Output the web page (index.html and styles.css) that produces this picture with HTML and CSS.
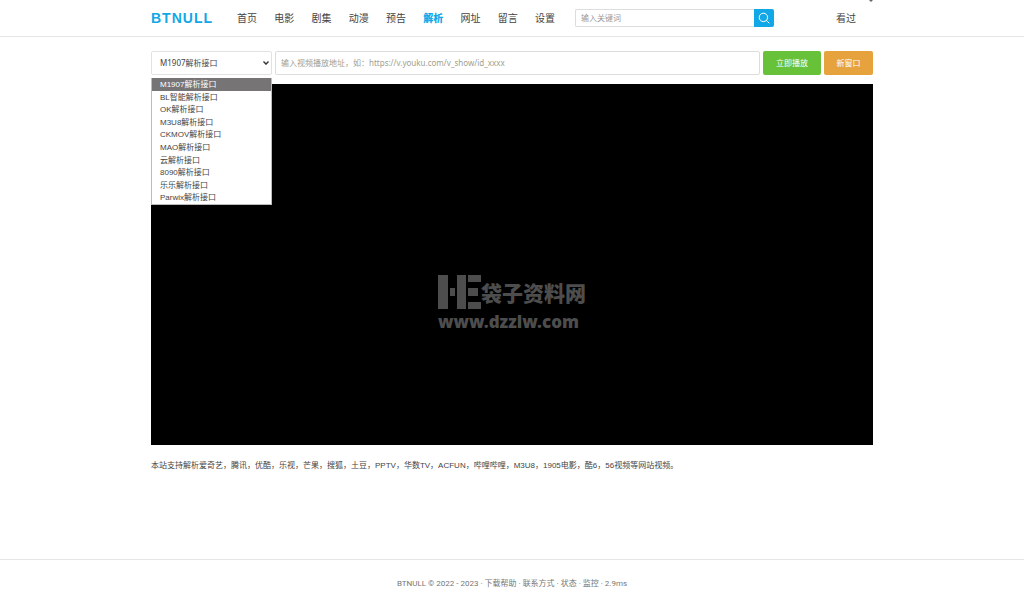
FILE: index.html
```html
<!DOCTYPE html>
<html lang="zh-CN">
<head>
<meta charset="utf-8">
<meta name="viewport" content="width=device-width, initial-scale=1">
<title>BTNULL 解析</title>
<link rel="stylesheet" href="styles.css">
</head>
<body>
<header class="header">
  <div class="container header-row">
    <a class="brand" href="#">BTNULL</a>
    <nav class="nav">
      <a href="#">首页</a>
      <a href="#">电影</a>
      <a href="#">剧集</a>
      <a href="#">动漫</a>
      <a href="#">预告</a>
      <a href="#" class="active" aria-current="page">解析</a>
      <a href="#">网址</a>
      <a href="#">留言</a>
      <a href="#">设置</a>
    </nav>
    <form class="search">
      <input type="search" placeholder="输入关键词" aria-label="输入关键词">
      <button type="button" aria-label="搜索">
        <svg viewBox="0 0 12 12" width="12" height="12" fill="none" stroke="#fff"><circle cx="5.4" cy="5.4" r="4.2"/><path d="M8.5 8.5 11 11" stroke-linecap="round"/></svg>
      </button>
    </form>
    <a class="history" href="#">看过</a>
  </div>
  <svg class="corner-mark" viewBox="0 0 4 2" width="4" height="2" aria-hidden="true"><path d="M0 0H4L2 2Z" fill="#666"/></svg>
</header>
<main class="container main">
  <form class="toolbar">
    <div class="picker">
      <select aria-label="解析接口">
        <option selected>M1907解析接口</option>
        <option>BL智能解析接口</option>
        <option>OK解析接口</option>
        <option>M3U8解析接口</option>
        <option>CKMOV解析接口</option>
        <option>MAO解析接口</option>
        <option>云解析接口</option>
        <option>8090解析接口</option>
        <option>乐乐解析接口</option>
        <option>Parwix解析接口</option>
      </select>
      <svg class="chevron" viewBox="0 0 6 4" width="6" height="4" fill="none" stroke="#333" stroke-width="1.4" aria-hidden="true"><path d="M.5.6 3 3.1 5.5.6"/></svg>
      <ul class="menu">
        <li class="selected">M1907解析接口</li>
        <li>BL智能解析接口</li>
        <li>OK解析接口</li>
        <li>M3U8解析接口</li>
        <li>CKMOV解析接口</li>
        <li>MAO解析接口</li>
        <li>云解析接口</li>
        <li>8090解析接口</li>
        <li>乐乐解析接口</li>
        <li>Parwix解析接口</li>
      </ul>
    </div>
    <input class="url" type="text" aria-label="视频播放地址" placeholder="输入视频播放地址，如：https://v.youku.com/v_show/id_xxxx">
    <button class="btn play" type="button">立即播放</button>
    <button class="btn window" type="button">新窗口</button>
  </form>
  <section class="player">
    <div class="watermark">
      <div class="watermark-top">
        <svg viewBox="0 0 43 34" width="43" height="34" fill="#4d4d4d" aria-hidden="true"><path d="M0 0H10V34H0ZM12 13H17V21H12ZM19 0H28V34H19ZM30 0H43V7H30ZM30 13H40V21H30ZM30 27H43V34H30Z"/></svg>
        <span>袋子资料网</span>
      </div>
      <div class="watermark-url">www.dzzlw.com</div>
    </div>
  </section>
  <p class="note">本站支持解析爱奇艺，腾讯，优酷，乐视，芒果，搜狐，土豆，PPTV，华数TV，ACFUN，哔哩哔哩，M3U8，1905电影，酷6，56视频等网站视频。</p>
</main>
<footer class="footer">BTNULL © 2022 - 2023 · <a href="#">下载帮助</a> · <a href="#">联系方式</a> · <a href="#">状态</a> · <a href="#">监控</a> · 2.9ms</footer>
</body>
</html>
```
FILE: styles.css
```css
* {
  box-sizing: border-box;
}

body {
  margin: 0;
  min-height: 100vh;
  display: flex;
  flex-direction: column;
  background: #fff;
  color: #444;
  font: 8px/12px "Liberation Sans", "Noto Sans CJK SC", sans-serif;
}

a {
  color: inherit;
  text-decoration: none;
}

input,
select,
button {
  margin: 0;
  font: 8px/12px "Noto Sans", "Noto Sans CJK SC", sans-serif;
}

.container {
  width: 100%;
  max-width: 722px;
  margin: 0 auto;
}

.header {
  position: relative;
  border-bottom: 1px solid #e6e6e6;
}

.header-row {
  display: flex;
  align-items: center;
  min-height: 36px;
  padding-right: 17px;
}

.corner-mark {
  position: absolute;
  top: 0;
  left: calc(50% + 357px);
}

.brand {
  width: 86px;
  color: #12a7e6;
  font-size: 14px;
  font-weight: bold;
  line-height: 20px;
  letter-spacing: 1px;
}

.nav {
  display: flex;
  justify-content: space-between;
  width: 318px;
  font: 10px/16px "Noto Sans CJK SC", sans-serif;
}

.nav .active {
  color: #12a7e6;
  font-weight: 900;
}

.search {
  display: flex;
  width: 199px;
  height: 18px;
  margin-left: 20px;
}

.search input {
  flex: 1;
  min-width: 0;
  padding: 0 5px;
  border: 1px solid #ddd;
  border-right: 0;
  border-radius: 2px 0 0 2px;
  appearance: none;
}

.search button {
  display: flex;
  align-items: center;
  justify-content: center;
  width: 20px;
  padding: 0;
  border: 0;
  border-radius: 0 2px 2px 0;
  background: #12a7e6;
}

.history {
  margin-left: auto;
  font: 10px/16px "Noto Sans CJK SC", sans-serif;
}

.main {
  flex: 1;
  padding-top: 14px;
}

.toolbar {
  display: flex;
  gap: 3px;
  height: 24px;
  margin-bottom: 9px;
}

.picker {
  position: relative;
  width: 121px;
}

.picker select {
  width: 100%;
  height: 100%;
  padding: 0 8px;
  border: 1px solid #e2e2e2;
  border-radius: 2px;
  background: #fff;
  color: #444;
  appearance: none;
}

.chevron {
  position: absolute;
  top: 10px;
  right: 3px;
  pointer-events: none;
}

.menu {
  position: absolute;
  z-index: 1;
  top: 27px;
  left: 0;
  display: grid;
  grid-auto-rows: 1fr;
  width: 100%;
  min-height: 127px;
  margin: 0;
  padding: 0;
  border: 1px solid #bbb;
  border-top: 0;
  background: #fff;
  line-height: 11px;
  list-style: none;
}

.menu li {
  padding: 1px 8px 0;
}

.menu .selected {
  background: #777476;
  color: #fff;
}

.url {
  flex: 1;
  min-width: 0;
  padding: 0 5px;
  border: 1px solid #ddd;
  border-radius: 2px;
}

.search input::placeholder {
  color: #999;
}

.url::placeholder {
  color: #a0a090;
}

.btn {
  padding: 0;
  border: 0;
  border-radius: 2px;
  color: #fff;
}

.play {
  width: 58px;
  background: #67c23a;
}

.window {
  width: 49px;
  background: #e6a23c;
}

.player {
  display: flex;
  align-items: center;
  justify-content: center;
  aspect-ratio: 2 / 1;
  padding-top: 80px;
  background: #000;
}

.watermark {
  color: #4d4d4d;
}

.watermark-top {
  display: flex;
  align-items: center;
  font: 900 21px/34px "Noto Sans CJK SC", sans-serif;
}

.watermark-url {
  font: 900 17px/26px "Noto Sans", sans-serif;
}

.note {
  margin: 15px 0;
}

.footer {
  padding: 18px 0 17px;
  border-top: 1px solid #e6e6e6;
  color: #777;
  font-family: Roboto, "Noto Sans CJK SC", sans-serif;
  text-align: center;
}
```
